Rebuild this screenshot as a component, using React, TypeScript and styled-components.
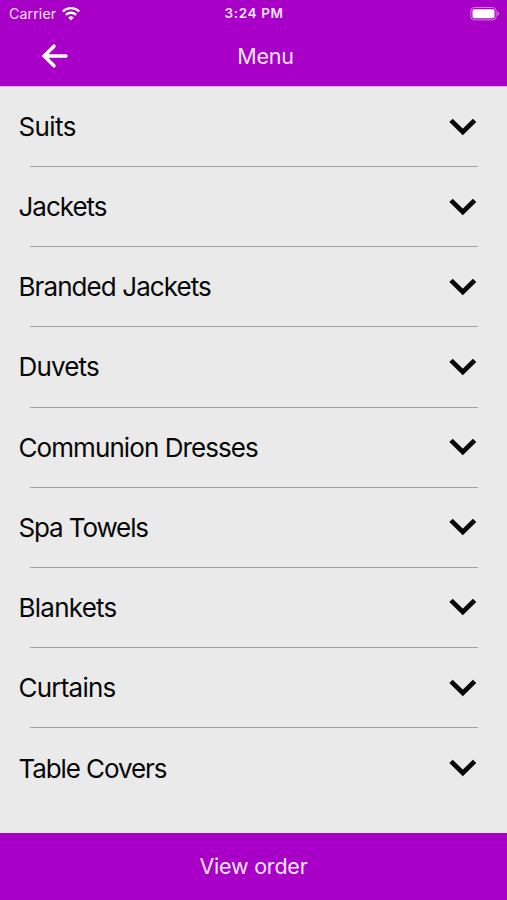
import React from 'react';
import styled, { createGlobalStyle } from 'styled-components';

const Global = createGlobalStyle`
  * { box-sizing: border-box; }
  body { margin: 0; background: #eaeaea; font-family: Inter, "Liberation Sans", sans-serif; }
`;
const Screen = styled.div`
  width: 507px; height: 900px; display: flex; flex-direction: column; background: #eaeaea; overflow: hidden;
`;
const Header = styled.header`
  height: 87px; background: #a900c7; color: #f8e6fb; flex: none; border-bottom: 1px solid #deb5e5;
`;
const StatusBar = styled.div`
  height: 27px; padding: 0 7px 0 9px; display: grid; grid-template-columns: 1fr auto 1fr; align-items: center;
`;
const Carrier = styled.div`
  display: flex; align-items: center; gap: 6px;
`;
const StatusText = styled.span<{ $bold?: boolean; $width: number }>`
  width: ${p => p.$width}px; white-space: nowrap;
  font-size: ${p => (p.$bold ? 13.5 : 14.2)}px; line-height: 27px; font-weight: ${p => (p.$bold ? 600 : 400)};
  letter-spacing: ${p => (p.$bold ? 0.65 : 0.1)}px;
`;
const Battery = styled.svg`justify-self: end; display: block;`;
const NavBar = styled.div`
  height: 58px; padding: 0 16px 0 40px; display: grid; grid-template-columns: 30px 1fr 30px; align-items: center;
`;
const BackButton = styled.button`
  border: 0; padding: 0; background: none; color: #fff; display: flex;
`;
const Title = styled.h1`
  margin: 0; text-align: center; font-size: 21.5px; font-weight: 400; line-height: 58px; letter-spacing: -0.2px;
`;
const List = styled.ul`
  list-style: none; margin: 0; padding: 0; flex: 1;
`;
const Row = styled.li`
  height: 80.15px; padding: 0 29px 0 18.5px; display: flex; flex-direction: column;
`;
const RowMain = styled.div`
  flex: 1; display: flex; align-items: center; justify-content: space-between; color: #080808;
`;
const Label = styled.span<{ $spacing: number }>`
  font-size: 26px; line-height: 32px; padding-top: 1px; letter-spacing: ${p => p.$spacing}px; white-space: nowrap;
`;
const Divider = styled.div`
  height: 1px; margin-left: 11.5px; background: #a0a0a0;
`;
const Footer = styled.button`
  height: 67px; flex: none; border: 0; background: #a900c7; color: #f8e6fb;
  font: 400 21.5px/67px Inter, sans-serif; letter-spacing: -0.22px; padding: 0;
`;

const items = [
  { name: 'Suits', spacing: -0.6 },
  { name: 'Jackets', spacing: -1.02 },
  { name: 'Branded Jackets', spacing: -0.92 },
  { name: 'Duvets', spacing: -0.85 },
  { name: 'Communion Dresses', spacing: -0.92 },
  { name: 'Spa Towels', spacing: -1.12 },
  { name: 'Blankets', spacing: -0.75 },
  { name: 'Curtains', spacing: -0.78 },
  { name: 'Table Covers', spacing: -1.1 },
];

export default function App() {
  return (
    <Screen>
      <Global />
      <Header>
        <StatusBar>
          <Carrier>
            <StatusText $width={47}>Carrier</StatusText>
            <svg width="18" height="14" viewBox="0 0 18 14" fill="none" stroke="#fff" strokeWidth="2.3">
              <path d="M.8 4.5a11.8 11.8 0 0 1 16.4 0M3.8 7.9a7.4 7.4 0 0 1 10.4 0" />
              <path d="M9 13.4 6.2 10.6a4 4 0 0 1 5.6 0Z" fill="#fff" stroke="none" />
            </svg>
          </Carrier>
          <StatusText $bold $width={60}>3:24 PM</StatusText>
          <Battery width="30" height="14" viewBox="0 0 30 14">
            <rect x="0.8" y="0.5" width="25.4" height="12.4" rx="3.5" fill="none" stroke="#d27fe1" />
            <rect x="2.5" y="2.2" width="22" height="9" rx="1.6" fill="#fff" />
            <path d="M27.5 4.5q1.7.6 1.7 2.2t-1.7 2.2z" fill="#d27fe1" />
          </Battery>
        </StatusBar>
        <NavBar>
          <BackButton aria-label="Back">
            <svg width="30" height="26" viewBox="0 0 30 26" fill="none" stroke="currentColor" strokeWidth="3.5" strokeLinecap="round">
              <path d="M26 13H5M14 3.2 4.2 13 14 22.8" />
            </svg>
          </BackButton>
          <Title>Menu</Title>
        </NavBar>
      </Header>
      <List>
        {items.map(({ name, spacing }, i) => (
          <Row key={name}>
            <RowMain>
              <Label $spacing={spacing}>{name}</Label>
              <svg width="30" height="20" viewBox="0 0 30 20" fill="none" stroke="currentColor" strokeWidth="4.8">
                <path d="M3 3.4 14.8 15 26.6 3.4" />
              </svg>
            </RowMain>
            {i < items.length - 1 && <Divider />}
          </Row>
        ))}
      </List>
      <Footer>View order</Footer>
    </Screen>
  );
}
